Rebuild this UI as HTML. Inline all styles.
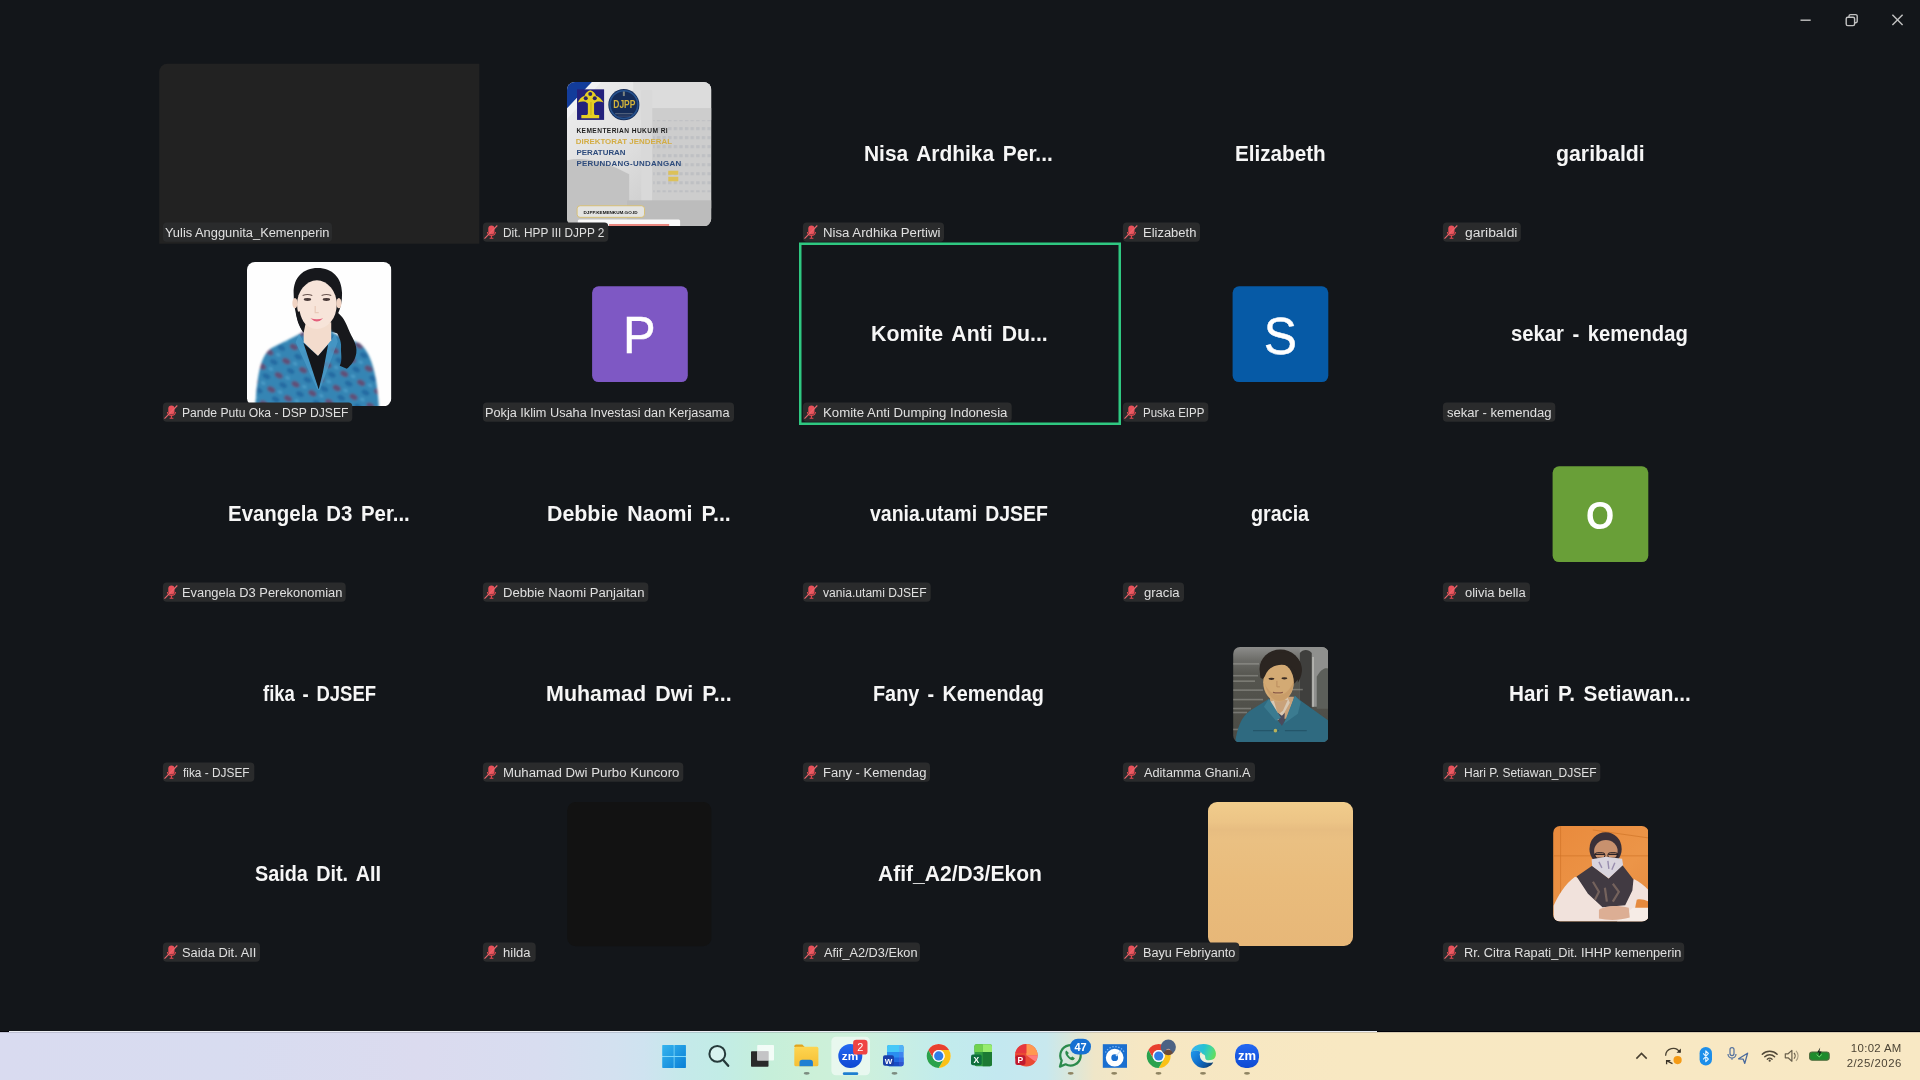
<!DOCTYPE html>
<html><head><meta charset="utf-8"><title>Zoom Meeting</title><style>
html,body{margin:0;padding:0}
body{width:1920px;height:1080px;overflow:hidden;background:#13161a;position:relative;font-family:"Liberation Sans",sans-serif}
.lt{position:absolute;white-space:pre;color:#e0e0e0;font-size:12.5px;line-height:19.4px;height:19.2px;transform-origin:0 50%}
.nm{position:absolute;white-space:pre;color:#f6f6f6;font-weight:bold;word-spacing:3px;font-size:21.2px;line-height:30px;height:30px;transform-origin:0 50%}
.ab{position:absolute}
.av{position:absolute;width:96px;height:96px;border-radius:7px;color:#fff;text-align:center;line-height:96px}
.av span{display:block;width:96px;height:96px;line-height:97px}
.tm{position:absolute;right:18.500px;white-space:pre;color:#4c4435;font-size:11.400px;line-height:14px;text-align:right}
#w{position:absolute;left:0;top:0;width:1920px;height:1080px;overflow:hidden;filter:blur(.45px)}
</style></head>
<body><div id="w">
<svg class="ab" style="left:0;top:0" width="1920" height="1032" viewBox="0 0 1920 1032" font-family="Liberation Sans, sans-serif">
<path d="M159.200 243.700V71.800a8 8 0 0 1 8-8H479.300V243.700z" fill="#222"/>
<rect x="800.250" y="243.750" width="319.500" height="180" fill="none" stroke="#2fc881" stroke-width="2.500"/>
<g fill="none" stroke="#c2c2c2" stroke-width="1.400" transform="translate(1790 8)">
<path d="M10.500 12.200h10.200"/>
<rect x="56.200" y="9.200" width="8.400" height="8.400" rx="1.600"/><path d="M59 9V8.200a1.600 1.600 0 0 1 1.600-1.600h5a1.600 1.600 0 0 1 1.600 1.600v5a1.600 1.600 0 0 1-1.600 1.600h-.9"/>
<path d="M102.400 6.700l10.200 10.400M112.600 6.700l-10.200 10.400"/>
</g>
<rect x="592.100" y="286.300" width="95.700" height="95.800" rx="6.500" fill="#7e58c4"/>
<rect x="1232.600" y="286.300" width="95.700" height="95.800" rx="6.500" fill="#065aa6"/>
<rect x="1552.600" y="466.300" width="95.700" height="95.800" rx="6.500" fill="#699f38"/>
<g fill="#fff" stroke="#fff" text-anchor="middle">
<text transform="translate(639.250 353.200) scale(.94 1)" font-size="52" stroke-width=".45">P</text>
<text transform="translate(1280.500 353.600) scale(.95 1)" font-size="52.500" stroke-width=".45">S</text>
<text transform="translate(1600.200 529) scale(.93 1)" font-size="39" font-weight="bold" stroke-width="0">O</text>
</g>
<rect x="567.200" y="802" width="144.300" height="144.200" rx="8.500" fill="#121212"/>

</svg>
<!-- DJPP banner avatar -->
<svg class="ab" style="left:567.2px;top:81.8px" width="144.4" height="144.4" viewBox="0 0 144 144">
<defs><clipPath id="c1"><rect width="144" height="144" rx="8"/></clipPath>
<linearGradient id="g1" x1="0" y1="0" x2="1" y2="1"><stop offset="0" stop-color="#efefef"/><stop offset=".45" stop-color="#dedede"/><stop offset="1" stop-color="#bdbdbd"/></linearGradient>
<pattern id="w1" width="5.6" height="9" patternUnits="userSpaceOnUse"><rect width="3.4" height="3" fill="#b9bbc0"/></pattern></defs>
<g clip-path="url(#c1)">
<rect width="144" height="144" fill="url(#g1)"/>
<rect x="66" y="0" width="78" height="38" fill="#dcdcdc"/>
<rect x="74" y="8" width="11" height="136" fill="#d9d9d9"/>
<rect x="85" y="26" width="59" height="100" fill="#cdcdcd"/>
<rect x="86" y="38" width="58" height="72" fill="url(#w1)" opacity=".75"/>
<path d="M0 78C18 74 40 80 62 92V144H0z" fill="#c2c2c2"/>
<rect x="60" y="118" width="84" height="26" fill="#bcbcbc"/>
<path d="M0 0H25L0 26.500z" fill="#123c9a"/><path d="M25 0h9L0 37v-10.500z" fill="#f2f2f4"/>
<rect x="10" y="7.300" width="27" height="30.500" fill="#24217c"/>
<path d="M10.800 20.500C12 17.500 14.500 14.500 17.500 13.800 18.500 11 20.500 8.600 23.200 8.200 26 8.600 28 11 29 13.800 32 14.500 34.500 17.500 36.500 20.500 34 19.200 31.500 19 29.500 19.800L27 21.500V31.500C27 32.500 28 33 29 33H32.100V36.200H14.300V33H18.800C19.800 33 20.800 32.500 20.800 31.500V21.500L18.300 19.800C16.300 19 13.800 19.200 10.800 20.500z" fill="#e6cf22"/>
<g fill="#2a2468"><circle cx="23.200" cy="12" r="2"/><circle cx="18.700" cy="16.300" r="2"/><circle cx="27.700" cy="16.300" r="2"/></g>
<path d="M23.900 20v13" stroke="#b89c14" stroke-width=".7"/>
<circle cx="56.700" cy="22.600" r="15.500" fill="#152c58"/><circle cx="56.700" cy="22.600" r="13.900" fill="none" stroke="#2a5c9c" stroke-width="1.600" opacity=".8"/>
<text x="57.200" y="26.300" font-size="11.500" font-weight="bold" fill="#d4b43a" text-anchor="middle" textLength="22" lengthAdjust="spacingAndGlyphs">DJPP</text>
<rect x="48" y="31.200" width="17.500" height=".9" fill="#9aa0a8" opacity=".6"/><rect x="50.500" y="33.600" width="12.500" height=".8" fill="#8a7a8a" opacity=".5"/>
<rect x="55.700" y="9.500" width="2" height="4.500" fill="#a8a890" opacity=".7"/>
<g font-weight="bold" lengthAdjust="spacingAndGlyphs">
<text x="9.400" y="51.200" font-size="6.600" fill="#1f1f1f" textLength="91">KEMENTERIAN HUKUM RI</text>
<text x="8.700" y="62" font-size="7.900" fill="#d3ad45" textLength="96">DIREKTORAT JENDERAL</text>
<text x="9.400" y="72.900" font-size="7.900" fill="#2d4b7c" textLength="49">PERATURAN</text>
<text x="9.400" y="84" font-size="7.900" fill="#2d4b7c" textLength="104.500">PERUNDANG-UNDANGAN</text>
</g>
<rect x="101" y="88.500" width="10" height="4" fill="#dcc15a"/><rect x="101" y="94.500" width="10" height="4.500" fill="#dcc15a"/>
<rect x="10.100" y="123.400" width="67.200" height="11.600" rx="3" fill="#e4e4e2" stroke="#d8bf6e" stroke-width=".9"/>
<text x="16.500" y="131.400" font-size="4.300" font-weight="bold" fill="#111" textLength="54" lengthAdjust="spacingAndGlyphs">DJPP.KEMENKUM.GO.ID</text>
<rect x="10.800" y="137.200" width="102" height="8" rx="1.500" fill="#fafafa"/>
<rect x="41.900" y="141.600" width="60" height="3" fill="#e2574c" opacity=".7"/>
</g></svg>
<!-- portrait 1 -->
<svg class="ab" style="left:247.2px;top:261.8px" width="144.4" height="144.4" viewBox="0 0 144 144">
<defs><clipPath id="c2"><rect width="144" height="144" rx="8"/></clipPath>
<filter id="b2" x="-10%" y="-10%" width="120%" height="120%"><feGaussianBlur stdDeviation="1.1"/></filter>
<pattern id="bt" width="19" height="16" patternUnits="userSpaceOnUse" patternTransform="rotate(28)"><rect width="19" height="16" fill="#3585b4"/><ellipse cx="5" cy="5" rx="4.200" ry="2.800" fill="#6f3d62" opacity=".75"/><ellipse cx="13.500" cy="11.500" rx="4" ry="2.600" fill="#2468a0" opacity=".9"/><ellipse cx="14" cy="3" rx="2.500" ry="1.600" fill="#55a6cf" opacity=".7"/></pattern></defs>
<g clip-path="url(#c2)">
<rect width="144" height="144" fill="#fefefe"/>
<path d="M70.500 6C56 6 46.300 15.500 46.500 31c.1 8 .9 15 2.500 21.500 1.400 5.600 3.500 11.500 7 17.500h30l7 2c-2-8-1.500-14-2.500-20 3-6 4.500-13 4.300-21C94.500 15.500 85 6 70.500 6z" fill="#17181c"/>
<g filter="url(#b2)"><path d="M8 150c2-40 6-57 16-64l28-14 8-5h22l6 5 24.500 9c12.500 11 17.500 33 19.500 69z" fill="url(#bt)"/></g>
<path d="M52 72 24 86C14 93 10 110 8 146" stroke="#fefefe" stroke-width="0" fill="none"/>
<path d="M52 71.500l-3.500 8.500L70 127l1.800 1L57 80.500zM88 71.500l2.500 8L72.500 128l-1-1 9.500-45z" fill="#4a9bc8" opacity=".75"/>
<path d="M56.500 60h27.500v18L70.800 94 56.500 80z" fill="#f3dccd"/>
<path d="M56.300 80.800 70.800 93.800 80.900 82.300 75.800 109.700 71.500 127z" fill="#14161a"/>
<ellipse cx="69.700" cy="42.500" rx="19.800" ry="24.200" fill="#f7e4d9"/>
<path d="M49.900 40c-.5-13 7-22 20-22s20.500 9 19.800 22c-2.500-9-9-14.500-19.800-14.500S52.500 31 49.900 40z" fill="#17181c" opacity=".0"/>
<ellipse cx="47.800" cy="41" rx="2.600" ry="5.200" fill="#f0d3c3"/><ellipse cx="91.600" cy="41" rx="2.600" ry="5.200" fill="#f0d3c3"/>
<ellipse cx="60.300" cy="37.400" rx="3.700" ry="1.400" fill="#4a3a38"/><ellipse cx="79.200" cy="37.400" rx="3.700" ry="1.400" fill="#4a3a38"/>
<path d="M55.500 33.400q4.800-2.200 9.600 0M74.400 33.400q4.800-2.200 9.600 0" stroke="#6a5650" stroke-width="1" fill="none"/>
<path d="M68 44v6.500h3.500" stroke="#e8c9b8" stroke-width="1.200" fill="none"/>
<path d="M63.300 56.200q6.400 1.700 12.800 0q-6.400 6.400-12.800 0z" fill="#e4607c"/>
<path d="M90 50c5.500 4.500 8.500 9.500 11 16.500 3.500 9 9.500 15.500 8 24.500-1.200 7-5 12-9.500 15.500l-7-3c3-6 .8-12.500 1.300-18.500.5-7-3-11.500-5.300-17.500-1.500-4-1.500-8-1-11z" fill="#17181c"/>
<path d="M49 50c.2 7 3 14.500 7.500 20.500l1.800-8.500c-3-3.500-4.800-8-5.800-13z" fill="#17181c"/>
</g></svg>
<!-- portrait 2 -->
<svg class="ab" style="left:1232.500px;top:646.500px" width="95.800" height="95.600" viewBox="0 0 96 96">
<defs><clipPath id="c3"><rect width="96" height="96" rx="7"/></clipPath>
<linearGradient id="g3" x1="0" y1="0" x2="0" y2="1"><stop offset="0" stop-color="#8d8d8b"/><stop offset=".14" stop-color="#6b6b67"/><stop offset=".3" stop-color="#55554f"/><stop offset="1" stop-color="#4a4a44"/></linearGradient></defs>
<g clip-path="url(#c3)">
<rect width="96" height="96" fill="url(#g3)"/>
<rect x="67" y="0" width="29" height="60" fill="#8f908e"/>
<path d="M67 6c3-4 9-4 12 0v56H67z" fill="#3f3f3d"/>
<path d="M84 30c4-8 9-10 12-8v40H84z" fill="#5c5f5a"/>
<rect x="79.500" y="10" width="1.600" height="50" fill="#b8b8b4"/>
<g fill="#9c9c96" opacity=".55"><rect x="0" y="16" width="26" height="1.800"/><rect x="0" y="28" width="25" height="1.600"/><rect x="0" y="33.500" width="22" height="1.600"/><rect x="0" y="42.500" width="30" height="1.600"/><rect x="56" y="42" width="14" height="1.500"/><rect x="0" y="52" width="30" height="1.600"/><rect x="0" y="61" width="18" height="1.600"/><rect x="0" y="65" width="14" height="1.600"/><rect x="0" y="82" width="8" height="1.600"/></g>
<!-- neck/shirt -->
<path d="M37 50h24v22H37z" fill="#c9a27a"/>
<path d="M37 55l6 20 6-5 8-14-3-7z" fill="#d9c9b4"/><path d="M41 54l4 14 5-4 5-11z" fill="#c9a27a"/><path d="M45 66l4 3 3-3-1 12-4 1z" fill="#4a4a5c"/>
<!-- hair back -->
<ellipse cx="47.500" cy="22" rx="21" ry="19.500" fill="#2b2521"/>
<!-- face -->
<ellipse cx="45.600" cy="35.500" rx="15.400" ry="19.500" fill="#d3aa74"/>
<path d="M31 34c2 8 4 14 9 18 4 3 9 3 13 0 5-4 7.500-10 8-18-4 10-9 14-15 14S33 43 31 34z" fill="#c39462" opacity=".6"/>
<path d="M27.500 31c-1.500-8 .5-15 5-19 6-6 17-9 26-5 7 3 11.500 10 10.500 18-.5 4-2 8-4 11 0-6-1.500-11-4-14.500-5-3.500-12-4.500-17.500-3-5.500 1.500-9.500 5-11.500 10.500-1.500 2.500-3 3.500-4.500 2z" fill="#2b2521"/>
<ellipse cx="38.500" cy="32" rx="3" ry="1.100" fill="#3a2c24"/><ellipse cx="51.500" cy="31.500" rx="3" ry="1.100" fill="#3a2c24"/>
<path d="M44 34v6h3" stroke="#b98c5e" stroke-width="1" fill="none"/>
<path d="M40 45.500q5 1.200 10 0" stroke="#8a5a48" stroke-width="1.200" fill="none"/>
<!-- jacket -->
<path d="M36 52 17 64C8 70 4 82 2 96h94V74L68 54l-6-5-8 22-5 8-7-9z" fill="#2f6a80"/>
<path d="M36 52l-5 8 12 14 5-3zM62 49l6 6-3 12-14 10z" fill="#3b7b90"/>
<path d="M20 84h26M52 84h22" stroke="#24566a" stroke-width="1.300"/>
<circle cx="42.500" cy="84" r="1.800" fill="#b9b25a"/>
</g></svg>
<!-- portrait 3 -->
<svg class="ab" style="left:1552.500px;top:826.300px" width="95.800" height="95.600" viewBox="0 0 96 96">
<defs><clipPath id="c4"><rect width="96" height="96" rx="7"/></clipPath>
<linearGradient id="g4" x1="0" y1="0" x2="1" y2="1"><stop offset="0" stop-color="#e98a3c"/><stop offset=".6" stop-color="#ec9548"/><stop offset="1" stop-color="#e58a3e"/></linearGradient></defs>
<g clip-path="url(#c4)">
<rect width="96" height="96" fill="url(#g4)"/>
<path d="M7.500 0v74M0 30h96M40 4 96 12" stroke="#cf7428" stroke-width="1" opacity=".7" fill="none"/>
<!-- body -->
<path d="M22 51C12 58 4 72 .5 80v16h95V64c-4-4-9-8-14-10.500L62 60 40 58z" fill="#f1e2dc"/>
<path d="M84 74c4-1 8 0 12 2v8H82z" fill="#e58a3e"/>
<path d="M80 82h16v14H64z" fill="#f6ece6"/>
<!-- scarf -->
<path d="M23.600 50.600 39.200 40l16.600 12.700L69.300 39l11.400 14.700-1.100 11-7.200 15-22.800 2L35 68z" fill="#413a42"/>
<path d="M40 56l6 10-4 8M60 58l6 8-6 10M52 62l2 14" stroke="#8a7468" stroke-width="2.200" fill="none" opacity=".7"/>
<!-- head scarf -->
<ellipse cx="52.700" cy="23" rx="16.200" ry="16.800" fill="#3a3038"/>
<ellipse cx="53" cy="25" rx="11.800" ry="11" fill="#c8916e"/>
<path d="M41.500 28.500h10.500M55.500 28.500h10" stroke="#2a2226" stroke-width="1.400"/><rect x="42" y="26.800" width="10" height="5.400" rx="2.400" fill="none" stroke="#2a2226" stroke-width="1"/><rect x="55" y="26.800" width="10" height="5.400" rx="2.400" fill="none" stroke="#2a2226" stroke-width="1"/>
<!-- mask -->
<path d="M38.700 33.500 53 31l16.300 2 1 6.200-14.500 13.500-16.600-12.500z" fill="#d9d5de"/>
<path d="M46 36l3 6M55 35l1 8M62 37l-3 7" stroke="#7d6f9a" stroke-width="1.400" opacity=".7"/>
<!-- hands -->
<path d="M46 84c6-4 18-5 30-2l1 10c-10 3-22 3-31 1z" fill="#dcae94"/>
</g></svg>
<!-- tan avatar -->
<div class="ab" style="left:1208px;top:801.600px;width:144.600px;height:144.400px;border-radius:9px;background:linear-gradient(180deg,#f1cd8c 0%,#ecc486 14%,#e7bd81 19%,#eac082 27%,#e9bc7c 55%,#e7b778 100%)"></div>

<svg class="ab" style="left:0;top:0" width="1920" height="1032" viewBox="0 0 1920 1032">
<defs><g id="m"><rect x="4.300" y=".9" width="6.200" height="9" rx="3.100" fill="#e8505a"/><path d="M3.400 7.400a4.100 4.100 0 0 0 8.100 0M7.400 11.400v2.100M5.600 13.600h3.800" fill="none" stroke="#e2474f" stroke-width="1.100"/><path d="M.5 14L13.300.9" stroke="#e9656b" stroke-width="1.100" fill="none"/></g></defs>
<rect x="162.9" y="222.6" width="169.1" height="19.2" rx="4" fill="#2a2b2c"/>
<rect x="482.9" y="222.6" width="125.4" height="19.2" rx="4" fill="#2a2b2c"/>
<use href="#m" x="484.0" y="224.6"/>
<rect x="802.9" y="222.6" width="141.1" height="19.2" rx="4" fill="#2a2b2c"/>
<use href="#m" x="804.0" y="224.6"/>
<rect x="1122.9" y="222.6" width="77.1" height="19.2" rx="4" fill="#2a2b2c"/>
<use href="#m" x="1124.0" y="224.6"/>
<rect x="1442.9" y="222.6" width="77.9" height="19.2" rx="4" fill="#2a2b2c"/>
<use href="#m" x="1444.0" y="224.6"/>
<rect x="162.9" y="402.6" width="189.4" height="19.2" rx="4" fill="#2a2b2c"/>
<use href="#m" x="164.0" y="404.6"/>
<rect x="482.9" y="402.6" width="251.1" height="19.2" rx="4" fill="#2a2b2c"/>
<rect x="802.9" y="402.6" width="208.8" height="19.2" rx="4" fill="#2a2b2c"/>
<use href="#m" x="804.0" y="404.6"/>
<rect x="1122.9" y="402.6" width="85.4" height="19.2" rx="4" fill="#2a2b2c"/>
<use href="#m" x="1124.0" y="404.6"/>
<rect x="1442.9" y="402.6" width="112.4" height="19.2" rx="4" fill="#2a2b2c"/>
<rect x="162.9" y="582.6" width="182.8" height="19.2" rx="4" fill="#2a2b2c"/>
<use href="#m" x="164.0" y="584.6"/>
<rect x="482.9" y="582.6" width="165.4" height="19.2" rx="4" fill="#2a2b2c"/>
<use href="#m" x="484.0" y="584.6"/>
<rect x="802.9" y="582.6" width="127.8" height="19.2" rx="4" fill="#2a2b2c"/>
<use href="#m" x="804.0" y="584.6"/>
<rect x="1122.9" y="582.6" width="61.1" height="19.2" rx="4" fill="#2a2b2c"/>
<use href="#m" x="1124.0" y="584.6"/>
<rect x="1442.9" y="582.6" width="87.1" height="19.2" rx="4" fill="#2a2b2c"/>
<use href="#m" x="1444.0" y="584.6"/>
<rect x="162.9" y="762.6" width="91.4" height="19.2" rx="4" fill="#2a2b2c"/>
<use href="#m" x="164.0" y="764.6"/>
<rect x="482.9" y="762.6" width="200.4" height="19.2" rx="4" fill="#2a2b2c"/>
<use href="#m" x="484.0" y="764.6"/>
<rect x="802.9" y="762.6" width="127.1" height="19.2" rx="4" fill="#2a2b2c"/>
<use href="#m" x="804.0" y="764.6"/>
<rect x="1122.9" y="762.6" width="132.1" height="19.2" rx="4" fill="#2a2b2c"/>
<use href="#m" x="1124.0" y="764.6"/>
<rect x="1442.9" y="762.6" width="157.4" height="19.2" rx="4" fill="#2a2b2c"/>
<use href="#m" x="1444.0" y="764.6"/>
<rect x="162.9" y="942.6" width="97.1" height="19.2" rx="4" fill="#2a2b2c"/>
<use href="#m" x="164.0" y="944.6"/>
<rect x="482.9" y="942.6" width="52.8" height="19.2" rx="4" fill="#2a2b2c"/>
<use href="#m" x="484.0" y="944.6"/>
<rect x="802.9" y="942.6" width="117.1" height="19.2" rx="4" fill="#2a2b2c"/>
<use href="#m" x="804.0" y="944.6"/>
<rect x="1122.9" y="942.6" width="116.4" height="19.2" rx="4" fill="#2a2b2c"/>
<use href="#m" x="1124.0" y="944.6"/>
<rect x="1442.9" y="942.6" width="241.3" height="19.2" rx="4" fill="#2a2b2c"/>
<use href="#m" x="1444.0" y="944.6"/>
</svg>
<span class="lt" style="left:165.20px;top:224.3px;transform:scaleX(1.0291)">Yulis Anggunita_Kemenperin</span>
<span class="lt" style="left:503.32px;top:224.3px;transform:scaleX(0.9462)">Dit. HPP III DJPP 2</span>
<span class="lt" style="left:823.30px;top:224.3px;transform:scaleX(1.0562)">Nisa Ardhika Pertiwi</span>
<span class="lt" style="left:1143.33px;top:224.3px;transform:scaleX(1.0376)">Elizabeth</span>
<span class="lt" style="left:1465.20px;top:224.3px;transform:scaleX(1.1101)">garibaldi</span>
<span class="lt" style="left:182.33px;top:404.3px;transform:scaleX(0.9714)">Pande Putu Oka - DSP DJSEF</span>
<span class="lt" style="left:485.30px;top:404.3px;transform:scaleX(1.0171)">Pokja Iklim Usaha Investasi dan Kerjasama</span>
<span class="lt" style="left:823.30px;top:404.3px;transform:scaleX(1.0576)">Komite Anti Dumping Indonesia</span>
<span class="lt" style="left:1143.33px;top:404.3px;transform:scaleX(0.9208)">Puska EIPP</span>
<span class="lt" style="left:1447.22px;top:404.3px;transform:scaleX(1.0448)">sekar - kemendag</span>
<span class="lt" style="left:182.33px;top:584.3px;transform:scaleX(1.0305)">Evangela D3 Perekonomian</span>
<span class="lt" style="left:503.30px;top:584.3px;transform:scaleX(1.0491)">Debbie Naomi Panjaitan</span>
<span class="lt" style="left:823.23px;top:584.3px;transform:scaleX(0.9681)">vania.utami DJSEF</span>
<span class="lt" style="left:1144.23px;top:584.3px;transform:scaleX(1.0447)">gracia</span>
<span class="lt" style="left:1465.20px;top:584.3px;transform:scaleX(1.0386)">olivia bella</span>
<span class="lt" style="left:183.23px;top:764.3px;transform:scaleX(0.9489)">fika - DJSEF</span>
<span class="lt" style="left:503.30px;top:764.3px;transform:scaleX(1.0581)">Muhamad Dwi Purbo Kuncoro</span>
<span class="lt" style="left:823.30px;top:764.3px;transform:scaleX(1.0407)">Fany - Kemendag</span>
<span class="lt" style="left:1144.23px;top:764.3px;transform:scaleX(1.0157)">Aditamma Ghani.A</span>
<span class="lt" style="left:1464.30px;top:764.3px;transform:scaleX(0.9597)">Hari P. Setiawan_DJSEF</span>
<span class="lt" style="left:182.33px;top:944.3px;transform:scaleX(1.0291)">Saida Dit. AII</span>
<span class="lt" style="left:503.30px;top:944.3px;transform:scaleX(1.0408)">hilda</span>
<span class="lt" style="left:824.20px;top:944.3px;transform:scaleX(1.0191)">Afif_A2/D3/Ekon</span>
<span class="lt" style="left:1143.33px;top:944.3px;transform:scaleX(1.0155)">Bayu Febriyanto</span>
<span class="lt" style="left:1464.30px;top:944.3px;transform:scaleX(1.0202)">Rr. Citra Rapati_Dit. IHHP kemenperin</span>
<span class="nm" style="left:864.16px;top:139.0px;transform:scaleX(0.9870)">Nisa Ardhika Per...</span>
<span class="nm" style="left:1235.07px;top:139.0px;transform:scaleX(0.9756)">Elizabeth</span>
<span class="nm" style="left:1556.09px;top:139.0px;transform:scaleX(1.0052)">garibaldi</span>
<span class="nm" style="left:871.12px;top:319.0px;transform:scaleX(1.0051)">Komite Anti Du...</span>
<span class="nm" style="left:1511.12px;top:319.0px;transform:scaleX(0.9555)">sekar - kemendag</span>
<span class="nm" style="left:228.10px;top:499.0px;transform:scaleX(0.9642)">Evangela D3 Per...</span>
<span class="nm" style="left:547.13px;top:499.0px;transform:scaleX(1.0086)">Debbie Naomi P...</span>
<span class="nm" style="left:870.04px;top:499.0px;transform:scaleX(0.9185)">vania.utami DJSEF</span>
<span class="nm" style="left:1250.96px;top:499.0px;transform:scaleX(0.9304)">gracia</span>
<span class="nm" style="left:263.04px;top:679.0px;transform:scaleX(0.8716)">fika - DJSEF</span>
<span class="nm" style="left:546.16px;top:679.0px;transform:scaleX(1.0128)">Muhamad Dwi P...</span>
<span class="nm" style="left:873.11px;top:679.0px;transform:scaleX(0.9353)">Fany - Kemendag</span>
<span class="nm" style="left:1509.14px;top:679.0px;transform:scaleX(0.9781)">Hari P. Setiawan...</span>
<span class="nm" style="left:255.02px;top:859.0px;transform:scaleX(0.9348)">Saida Dit. AII</span>
<span class="nm" style="left:878.00px;top:859.0px;transform:scaleX(0.9945)">Afif_A2/D3/Ekon</span>
<!-- taskbar -->
<div class="ab" style="left:0;top:1030.6px;width:1920px;height:1.6px;background:#020208"></div>
<div class="ab" style="left:0;top:1032px;width:1920px;height:48px;background:linear-gradient(90deg,#d9dbf0 0,#d8dcf0 12%,#dbdbef 22%,#d8ddf0 28%,#d3e1f0 32%,#cfe3f0 33.500%,#c5e9ea 35.500%,#c2ece6 37.500%,#c6efda 40%,#ccf0d8 42.500%,#cdf0dc 45%,#c8eee4 47%,#c2ecec 49%,#c3e8f0 52%,#c8e8ee 54.500%,#d9e7dc 55.700%,#efe6c8 57%,#f6e7c3 59.500%,#f8e8c2 70%,#f8e8c4 100%)"></div>
<div class="ab" style="left:0;top:1032px;width:1920px;height:1.200px;background:rgba(90,90,110,.22)"></div>
<div class="ab" style="left:8.500px;top:1030.700px;width:1368.500px;height:1.300px;background:#eceef4"></div>
<svg class="ab" style="left:0;top:1032px" width="1920" height="48" viewBox="0 1032 1920 48" font-family="Liberation Sans, sans-serif">
<defs>
<linearGradient id="wl" gradientUnits="userSpaceOnUse" x1="662" y1="1045" x2="686" y2="1068"><stop offset="0" stop-color="#35b4ee"/><stop offset="1" stop-color="#0a7fd6"/></linearGradient>
<linearGradient id="fy" x1="0" y1="0" x2="0" y2="1"><stop offset="0" stop-color="#fdd550"/><stop offset="1" stop-color="#f6bf34"/></linearGradient>
<linearGradient id="zb" x1="0" y1="0" x2="0" y2="1"><stop offset="0" stop-color="#2468f2"/><stop offset="1" stop-color="#0d49d2"/></linearGradient>
<linearGradient id="ec" gradientUnits="userSpaceOnUse" x1="-11" y1="-6" x2="11" y2="2"><stop offset="0" stop-color="#36b4ee"/><stop offset=".45" stop-color="#26c2d2"/><stop offset=".75" stop-color="#46d896"/><stop offset="1" stop-color="#66dc58"/></linearGradient><linearGradient id="ew" gradientUnits="userSpaceOnUse" x1="-10" y1="-4" x2="7" y2="11"><stop offset="0" stop-color="#1e92e6"/><stop offset=".45" stop-color="#1070cc"/><stop offset=".8" stop-color="#0f569e"/><stop offset="1" stop-color="#123a64"/></linearGradient>
<path id="chs" d="M0-6H10.390A12 12 0 0 0-10.390-6L-5.196 3A6 6 0 0 1 0-6z"/><g id="chr"><circle r="11.800" fill="#fff"/><use href="#chs" fill="#e8402e"/><use href="#chs" transform="rotate(120)" fill="#fbc116"/><use href="#chs" transform="rotate(240)" fill="#2ba24c"/><circle r="5.900" fill="#f4f8fc"/><circle r="4.600" fill="#2f7de6"/></g>
<ellipse id="dt" rx="3" ry="1.400"/>
</defs>
<!-- start -->
<rect x="662.300" y="1045.100" width="23.600" height="22.800" rx=".8" fill="#7fd8fa"/><g fill="url(#wl)"><rect x="662.300" y="1045.100" width="11.400" height="11" rx=".6"/><rect x="674.500" y="1045.100" width="11.400" height="11" rx=".6"/><rect x="662.300" y="1056.900" width="11.400" height="11" rx=".6"/><rect x="674.500" y="1056.900" width="11.400" height="11" rx=".6"/></g>
<!-- search -->
<circle cx="717.300" cy="1053.900" r="7.900" fill="rgba(255,255,255,.35)" stroke="#25393a" stroke-width="2"/><path d="M723.200 1060l5 5.800" stroke="#25393a" stroke-width="2.300" stroke-linecap="round"/>
<!-- task view -->
<rect x="751" y="1051.200" width="17.500" height="15.500" rx=".8" fill="#2a2a2a"/><rect x="757.200" y="1045" width="16.800" height="15.500" rx=".8" fill="rgba(255,255,255,.78)"/><rect x="757.200" y="1051.200" width="11.300" height="9.300" fill="#c4c4c6"/>
<!-- explorer -->
<path d="M794.300 1046.200a1.800 1.800 0 0 1 1.800-1.800h6.200l2.400 2.600h-10.400z" fill="#e0a41e"/><rect x="794.300" y="1046.800" width="24.100" height="19.500" rx="1.600" fill="url(#fy)"/><path d="M799.500 1066.300v-3.700a2.800 2.800 0 0 1 2.800-2.800h7.800a2.800 2.800 0 0 1 2.800 2.800v3.700z" fill="#1e7fd2"/>
<use href="#dt" x="806.700" y="1073.300" fill="#7c8c80"/>
<!-- zoom active -->
<rect x="831.400" y="1036.700" width="38.600" height="38.600" rx="4.500" fill="rgba(255,255,255,.55)"/>
<circle cx="850.300" cy="1056" r="12" fill="url(#zb)"/>
<text x="850" y="1059.800" font-size="11.800" font-weight="bold" fill="#fff" text-anchor="middle">zm</text>
<rect x="853.100" y="1039.800" width="14.400" height="14.800" rx="3.200" fill="#ef4343"/><text x="860.300" y="1051.200" font-size="11" fill="#fff" text-anchor="middle">2</text>
<rect x="842.800" y="1072.200" width="15.500" height="2.900" rx="1.450" fill="#1e7fd0"/>
<!-- word -->
<rect x="887" y="1045" width="16.600" height="21.300" rx="2.200" fill="#2a8ef0"/><path d="M887 1052V1047.200a2.200 2.200 0 0 1 2.200-2.200h12.200a2.200 2.200 0 0 1 2.200 2.200V1052z" fill="#45c8f8"/><rect x="887" y="1057.500" width="16.600" height="4.500" fill="#1f6ae0"/><path d="M887 1062h16.600v2.100a2.200 2.200 0 0 1-2.200 2.200h-12.200a2.200 2.200 0 0 1-2.200-2.200z" fill="#174cc4"/><rect x="899" y="1045" width="4.600" height="21.300" rx="2" fill="#7a6af0" opacity=".25"/>
<rect x="883" y="1055.300" width="11" height="10.500" rx="2" fill="#1a3fa8"/><text x="888.500" y="1063.600" font-size="8" font-weight="bold" fill="#fff" text-anchor="middle">W</text>
<use href="#dt" x="894.500" y="1073.300" fill="#7c8c80"/>
<!-- chrome -->
<use href="#chr" x="938.700" y="1055.900"/>
<!-- excel -->
<rect x="974.400" y="1044.300" width="17.600" height="22" rx="2" fill="#2f9c42"/><path d="M974.400 1052V1046.300a2 2 0 0 1 2-2h6.300V1052z" fill="#72d24e"/><path d="M982.700 1044.300h7.300a2 2 0 0 1 2 2V1052h-9.300z" fill="#98ec6e"/><path d="M982.700 1052h9.300v12.300a2 2 0 0 1-2 2h-7.300z" fill="#1c7a34"/>
<rect x="971" y="1054.600" width="10.700" height="10.700" rx="2" fill="#0f6e3e"/><text x="976.350" y="1063.100" font-size="8.500" font-weight="bold" fill="#fff" text-anchor="middle">X</text>
<!-- powerpoint -->
<circle cx="1026.300" cy="1055.300" r="11.300" fill="#ea4a34"/><path d="M1026.300 1055.300V1044a11.300 11.300 0 0 1 11.300 11.300z" fill="#ff9850"/><path d="M1026.300 1055.300h11.300a11.300 11.300 0 0 1-2 6.400z" fill="#ff7c7c"/><path d="M1026.300 1044a11.300 11.300 0 0 0-11 9h11z" fill="#e6383e"/>
<rect x="1015.300" y="1055.300" width="10.200" height="9.800" rx="2" fill="#c01a2e"/><text x="1020.400" y="1063.300" font-size="8.500" font-weight="bold" fill="#fff" text-anchor="middle">P</text>
<!-- whatsapp -->
<path d="M1060 1066.600l1.700-6.100a10.200 10.200 0 1 1 3.900 3.800z" fill="none" stroke="#2b8a4c" stroke-width="2.300" stroke-linejoin="round"/>
<path d="M1066.300 1050.500c-1.500 1.200-1.300 3.400.7 6 2 2.700 4.600 4.300 6.600 3.600l1.300-1.800-2.600-1.700-1.300 1c-1.300-.6-2.500-2-3.200-3.400l1.100-1.200z" fill="#2b8a4c"/>
<rect x="1070" y="1038.800" width="21" height="15.800" rx="7.900" fill="#1670d2"/><text x="1080.500" y="1050.800" font-size="11" font-weight="bold" fill="#fff" text-anchor="middle">47</text>
<use href="#dt" x="1070.700" y="1073.300" fill="#8f8462"/>
<!-- dial app -->
<rect x="1102.800" y="1044.200" width="24.200" height="23.600" fill="#1a6fd0"/><circle cx="1114.700" cy="1057.700" r="6.150" fill="none" stroke="#fff" stroke-width="5.500"/><path d="M1114.700 1057.700l6-7" stroke="#cfe4fa" stroke-width="1.200"/><circle cx="1114.700" cy="1057.700" r="2.200" fill="#1a6fd0"/>
<path d="M1105.500 1052.500a10.500 10.500 0 0 1 18.600-.5" fill="none" stroke="#8cc0f4" stroke-width="1.300" stroke-dasharray="1.200 1.800"/>
<use href="#dt" x="1114.200" y="1073.300" fill="#8f8462"/>
<!-- chrome 2 with profile -->
<use href="#chr" x="1158.700" y="1056"/><circle cx="1168.300" cy="1047.100" r="7.600" fill="#4c6284"/><circle cx="1168.300" cy="1051" r="2.300" fill="#c9a69a"/><path d="M1163.800 1053.500a4.600 4.600 0 0 1 9 0 7.600 7.600 0 0 1-9 0z" fill="#6a4a3a"/>
<use href="#dt" x="1158.500" y="1073.300" fill="#8f8462"/>
<!-- edge -->
<g transform="translate(1203.300 1056)">
<path d="M-.7-2.100C-2.800-1.800-3.900 0-2.500 3-1.500 4.600 0 5.600 1.900 6.200 4.500 7 7.500 6.900 9.900 6.200L9.300 3.600C7.500 4.200 5 4.300 3.400 3.900 2.300 3.200 1.800 2 1.900.9 2-.5 1-1.800-.7-2.100z" fill="#eef3e0"/>
<path d="M-12.300-4.100C-11-9.500-6-12.200.4-12.100 7.500-12 12.300-8 12.600-2.700 12.800.5 11.500 2.800 9.300 3.600 7.500 4.200 5 4.300 3.400 3.900 2.300 3.200 1.800 2 1.900.9 2-.5 1-1.800-.7-2.100-1.500-3-2-3.600-2.500-4.100-5-5.800-8.500-6.300-12.300-4.100z" fill="url(#ec)"/>
<path d="M-12.300-4.100C-9-6.200-5.500-5.800-2.500-4.100-3.600-2.800-3.800-1.500-3.400-.6-3.300.8-3.100 2-2.500 3-1.500 4.600 0 5.600 1.900 6.200 3.500 6.800 5 6.900 6.400 6.800 7.600 6.700 8.800 6.500 9.900 6.200 9.200 8 8 9.200 6.400 10.100 4.600 11.300 2.600 12 .4 12-2.600 12-5.200 11-7 9.200-9 7.600-10.600 5.600-11.400 3.300-12.300 1-12.700-1.500-12.300-4.100z" fill="url(#ew)"/>
</g>
<use href="#dt" x="1203" y="1073.300" fill="#8f8462"/>
<!-- zoom 2 -->
<rect x="1235" y="1044" width="24" height="24" rx="10.500" fill="url(#zb)"/><text x="1247" y="1060.200" font-size="13" font-weight="bold" fill="#fff" text-anchor="middle">zm</text>
<use href="#dt" x="1247" y="1073.300" fill="#8f8462"/>
<!-- tray -->
<path d="M1636.400 1058.600l5.100-5.200 5.200 5.200" fill="none" stroke="#473f30" stroke-width="1.500"/>
<path d="M1665.600 1055.800a7.600 7.600 0 0 1 14.200-3.600" fill="none" stroke="#4a4232" stroke-width="1.300"/><path d="M1680.900 1048.400v4.400h-4.400z" fill="#3a3226"/><path d="M1672.500 1063.600l-5.400-2.600M1666.600 1064.200v-3.600h3.800" fill="none" stroke="#3a3226" stroke-width="1.300"/>
<circle cx="1677.600" cy="1060.100" r="4.100" fill="#f59b15"/>
<rect x="1699.600" y="1047" width="12.400" height="18.600" rx="6.200" fill="#1d8ee9"/><path d="M1703.200 1053.300l5.200 5.800-2.600 2.600v-10.800l2.600 2.600-5.200 5.800" fill="none" stroke="#e9f6ff" stroke-width="1.100" stroke-linejoin="round"/>
<rect x="1730" y="1047.600" width="4" height="8" rx="2" fill="none" stroke="#52709e" stroke-width="1.200"/><path d="M1728 1054a4 4 0 0 0 8 0M1732 1058v1.800" fill="none" stroke="#52709e" stroke-width="1.200"/>
<path d="M1738.600 1058.800l9-5.600-2.800 10.200-1.600-4.200z" fill="none" stroke="#4a6a9c" stroke-width="1.300" stroke-linejoin="round"/>
<g fill="none" stroke="#514838" stroke-width="1.500" stroke-linecap="round"><path d="M1762.300 1054.200a10.500 10.500 0 0 1 14.800 0"/><path d="M1764.800 1056.800a7 7 0 0 1 9.800 0"/><path d="M1767.300 1059.300a3.400 3.400 0 0 1 4.800 0" stroke-width="1.300"/></g><circle cx="1769.700" cy="1060.700" r="1.100" fill="#514838"/>
<path d="M1785.300 1053.800h2.800l3.800-3.400v10.800l-3.800-3.400h-2.800z" fill="none" stroke="#6a604c" stroke-width="1.200" stroke-linejoin="round"/><path d="M1794 1053a4 4 0 0 1 0 5.600" fill="none" stroke="#6a604c" stroke-width="1.200"/><path d="M1796 1050.800a7 7 0 0 1 0 10" fill="none" stroke="#6a604c" stroke-width="1.100" opacity=".55"/>
<rect x="1809.600" y="1052" width="19.600" height="8.200" rx="2.600" fill="#1e8b2c" stroke="#4f6c3e" stroke-width="1.100"/><path d="M1820.200 1047.400l-3 5h2.200l-1 4.600 3.200-5.600h-2.200z" fill="#18201a"/><path d="M1816.600 1054.500l2.600 2.400 2.600-2.400" fill="none" stroke="#8df08a" stroke-width="1" opacity=".8"/>
</svg>
<span class="tm" style="top:1040.500px;letter-spacing:.35px;right:18.300px">10:02 AM</span><span class="tm" style="top:1055.800px;letter-spacing:.5px;right:18.200px">2/25/2026</span>

</div></body></html>
